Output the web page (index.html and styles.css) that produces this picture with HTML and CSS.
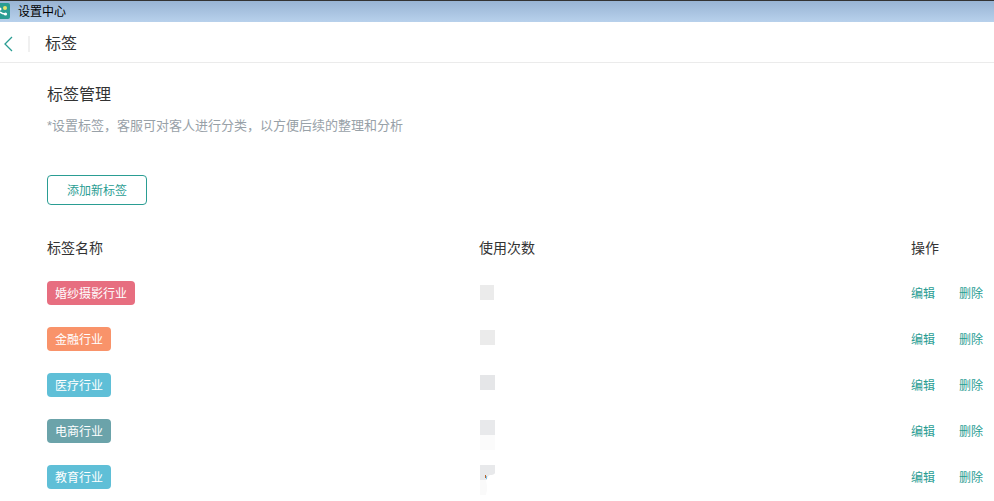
FILE: index.html
```html
<!DOCTYPE html>
<html lang="zh-CN">
<head>
  <meta charset="UTF-8">
  <meta name="viewport" content="width=device-width, initial-scale=1.0">
  <title>设置中心</title>
  <link rel="stylesheet" href="styles.css">
</head>
<body>

  <div class="title-bar">
    <svg class="app-icon" width="10" height="16" viewBox="0 0 10 16">
      <path d="M0 0H8Q10 0 10 2V14Q10 16 8 16H0Z" fill="#2a9d93"/>
      <circle cx="5" cy="5" r="2" fill="#e9e46a"/>
      <circle cx="0" cy="6" r="1.5" fill="#fff"/>
      <path d="M0 9Q2 11 5 11" fill="none" stroke="#fff" stroke-width="1.6"/>
      <circle cx="5.5" cy="11" r="1.6" fill="#fff"/>
    </svg>
    <span>设置中心</span>
  </div>

  <header class="page-header">
    <a href="#" class="back-link" aria-label="返回">
      <svg width="10" height="16" viewBox="0 0 10 16">
        <path d="M9 1L2 8L9 15" fill="none" stroke="#2a9d93" stroke-width="1.3"/>
      </svg>
    </a>
    <h1>标签</h1>
  </header>

  <main class="content">
    <h2>标签管理</h2>
    <p class="hint">*设置标签，客服可对客人进行分类，以方便后续的整理和分析</p>
    <button type="button" class="add-button">添加新标签</button>

    <table class="tag-table">
      <thead>
        <tr>
          <th>标签名称</th>
          <th>使用次数</th>
          <th class="action-col">操作</th>
        </tr>
      </thead>
      <tbody>
        <tr>
          <td><span class="tag tag-red">婚纱摄影行业</span></td>
          <td><svg class="count" width="16" height="46"><rect x="1" y="15" width="14" height="15" fill="#ebebeb"/></svg></td>
          <td><div class="actions"><a href="#">编辑</a><a href="#">删除</a></div></td>
        </tr>
        <tr>
          <td><span class="tag tag-orange">金融行业</span></td>
          <td><svg class="count" width="16" height="46"><rect x="1" y="14" width="15" height="15" fill="#ebebeb"/></svg></td>
          <td><div class="actions"><a href="#">编辑</a><a href="#">删除</a></div></td>
        </tr>
        <tr>
          <td><span class="tag tag-blue">医疗行业</span></td>
          <td><svg class="count" width="16" height="46"><rect x="1" y="13" width="15" height="15" fill="#e5e6e8"/></svg></td>
          <td><div class="actions"><a href="#">编辑</a><a href="#">删除</a></div></td>
        </tr>
        <tr>
          <td><span class="tag tag-gray">电商行业</span></td>
          <td><svg class="count" width="16" height="46"><rect x="1" y="12" width="15" height="15" fill="#e8e9eb"/><rect x="1" y="27" width="15" height="15" fill="#fbfbfb"/></svg></td>
          <td><div class="actions"><a href="#">编辑</a><a href="#">删除</a></div></td>
        </tr>
        <tr>
          <td><span class="tag tag-blue">教育行业</span></td>
          <td>
            <svg class="count" width="16" height="46">
              <path d="M1 11H16V19Q15 21 11 21Q8 22 8 26H1Z" fill="#e8e9eb"/>
              <path d="M1 26H7Q9 34 7 41H1Z" fill="#fafafa"/>
              <rect x="6" y="21" width="1" height="3" fill="#b5652b"/>
              <rect x="7" y="22" width="1" height="3" fill="#7fc4ee"/>
            </svg>
          </td>
          <td><div class="actions"><a href="#">编辑</a><a href="#">删除</a></div></td>
        </tr>
      </tbody>
    </table>
  </main>

</body>
</html>
```
FILE: styles.css
```css
* {
  box-sizing: border-box;
}

body {
  margin: 0;
  background: #fff;
  color: #333;
  font-family: "Liberation Sans", "Noto Sans CJK SC", sans-serif;
  font-size: 12px;
}

h1, h2, p {
  margin: 0;
  font-weight: 400;
}

a {
  color: #2a9d93;
  text-decoration: none;
}

.title-bar {
  display: flex;
  align-items: center;
  gap: 8px;
  height: 22px;
  border-top: 1px solid #333;
  background: linear-gradient(#98b4d4, #b8d1ec);
  color: #000;
  line-height: 20px;
}

.app-icon {
  margin-bottom: 2px;
}

.page-header {
  display: flex;
  align-items: center;
  height: 41px;
  padding-top: 3px;
  border-bottom: 1px solid #ebebeb;
}

.back-link {
  display: flex;
  width: 30px;
  padding-left: 3px;
  border-right: 2px solid #f0f0f0;
}

.page-header h1 {
  margin-left: 15px;
  font-size: 16px;
  line-height: 24px;
}

.content {
  padding: 20px 0 0 47px;
}

.content h2 {
  font-size: 16px;
  line-height: 24px;
}

.hint {
  margin-top: 9px;
  color: #98a1a8;
  font-size: 13px;
  line-height: 20px;
}

.add-button {
  display: block;
  width: 100px;
  height: 30px;
  margin-top: 39px;
  padding: 0 0 2px;
  border: 1px solid #2a9d93;
  border-radius: 4px;
  background: #fff;
  color: #2a9d93;
  font: inherit;
  cursor: pointer;
}

.tag-table {
  width: 100%;
  margin-top: 21px;
  table-layout: fixed;
  border-collapse: collapse;
}

.tag-table th {
  height: 44px;
  padding: 0 0 2px;
  font-size: 14px;
  font-weight: 400;
  text-align: left;
}

.tag-table td {
  height: 46px;
  padding: 0;
}

.action-col {
  width: 83px;
}

.tag {
  display: block;
  width: fit-content;
  padding: 2px 8px 0;
  border-radius: 4px;
  color: #fff;
  line-height: 22px;
}

.tag-red {
  background: #e76e80;
}

.tag-orange {
  background: #f9936a;
}

.tag-blue {
  background: #5fbfd7;
}

.tag-gray {
  background: #6ba3aa;
}

.count {
  display: block;
}

.actions {
  display: flex;
  gap: 24px;
  padding-bottom: 2px;
}
```
